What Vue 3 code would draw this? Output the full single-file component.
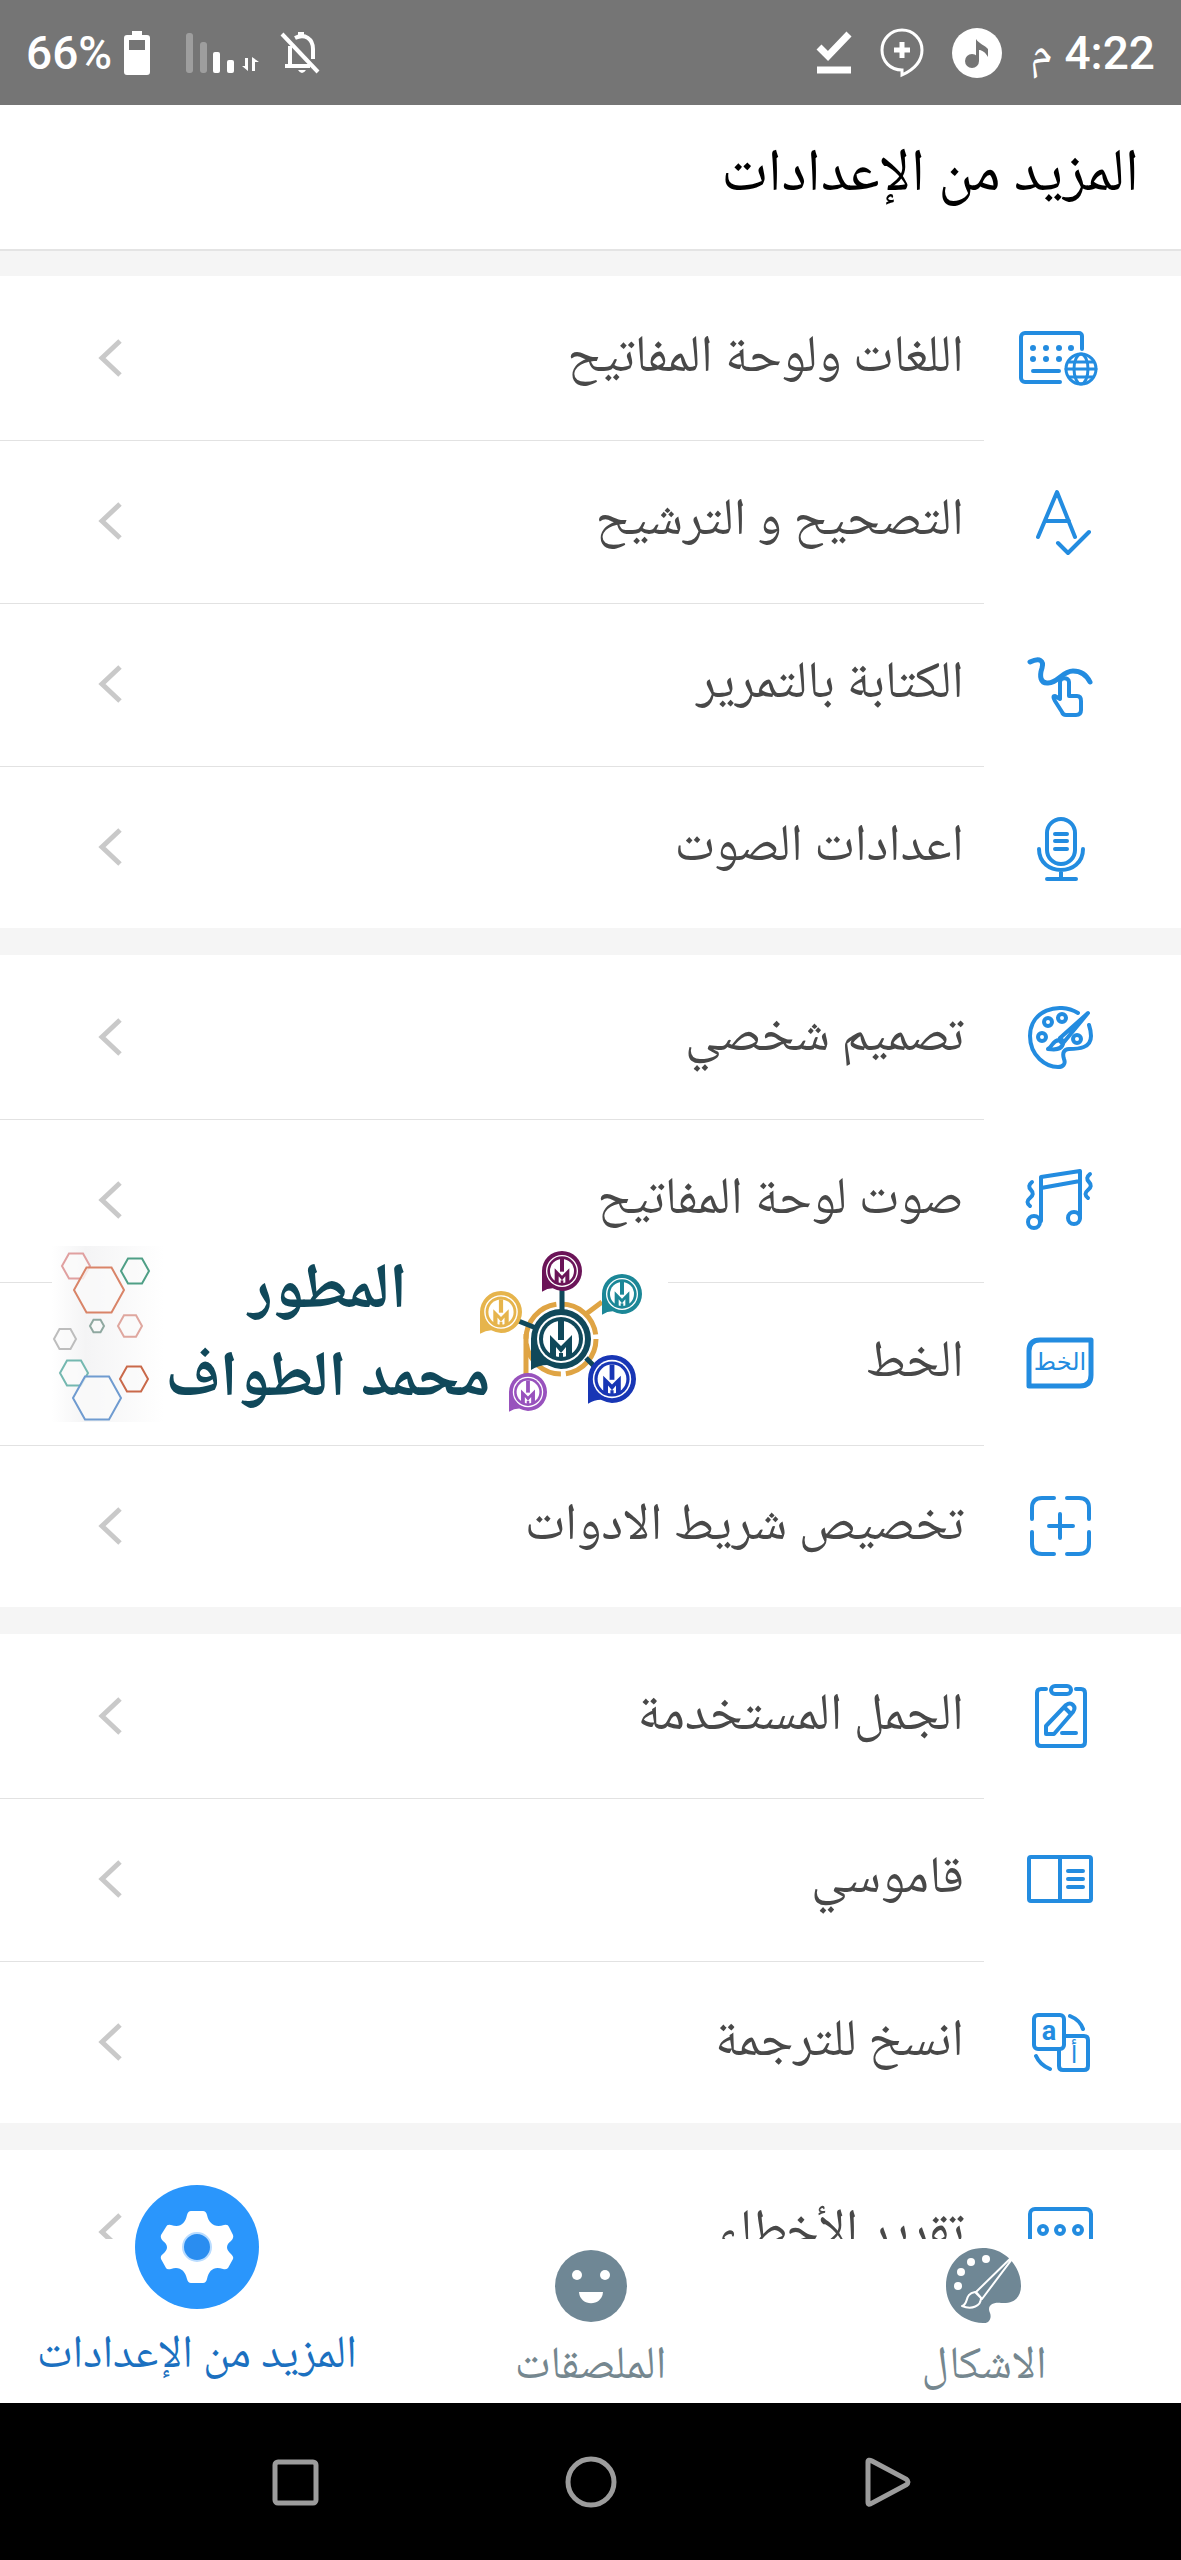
<script setup>
const icons = {
  keyboard:
    '<path d="M70 39V26a3 3 0 0 0-3-3H13a4 4 0 0 0-4 4v41a4 4 0 0 0 4 4h35M21 61h26"/><path stroke-width="6" d="M21 38h0M34 38h0M47 38h0M59 38h0M21 49h0M34 49h0M47 49h0"/><g stroke-width="3"><circle cx="69" cy="59" r="15"/><ellipse cx="69" cy="59" rx="7" ry="15"/><path d="M54 59h30M57 52h24M57 67h24"/></g>',
  correction: '<path d="M26 64 45 19 63 64M33 48h24M46 70l10 10 21-21"/>',
  swipe:
    '<path stroke-width="5" d="M18 26c10-5 14-1 12 6-3 9-1 15 5 15 10 1 15-12 26-12 9 0 14 5 17 11"/><path d="M48 63V46c0-5 9-5 9 0v14h8q4 0 4 5v9q0 5-5 5H54q-3 0-4-3l-7-11q-3-5 0-5z"/>',
  mic:
    '<rect x="35" y="20" width="28" height="45" rx="14"/><path d="M43 35h12M43 42h12M43 50h12M27 50c0 28 44 28 44 0M49 72v8M35 80h29"/>',
  palette:
    '<path d="M66 24C46 12 18 22 18 47c0 20 16 31 28 31 5 0 8-3 6-8-2-6 0-10 5-10 10 0 22-1 22-13 0-4-1-8-2-11"/><circle cx="36" cy="33" r="4"/><circle cx="50" cy="29" r="4"/><circle cx="30" cy="48" r="4"/><circle cx="65" cy="50" r="4"/><path d="M76 24 52 53l-4-4zM47 51l4 4c-2 6-8 6-15 5 5-3 4-8 11-9z"/>',
  sound:
    '<circle cx="22" cy="70" r="6"/><circle cx="62" cy="66" r="6"/><path d="M29 69V25l39-6v47M29 36l39-7"/><path d="M20 30q-5 4-1 8t-1 8 0 8M78 22q-5 4-1 8t-1 8 0 8"/>',
  font:
    '<path stroke-width="5" d="M17 71V36q0-11 11-11h51v35q0 11-11 11z"/><text x="48" y="55" font-size="24" font-family="DejaVu Sans, sans-serif" text-anchor="middle" fill="currentColor" stroke="none">الخط</text>',
  toolbar:
    '<path d="M42 20H30q-10 0-10 10v11M55 20h12q10 0 10 10v11M42 76H30q-10 0-10-10V54M55 76h12q10 0 10-10V54M37 48h24M48 36v24"/>',
  phrases:
    '<path d="M34 21h-5q-4 0-4 4v49q0 4 4 4h40q4 0 4-4V25q0-4-4-4h-5"/><rect x="39" y="18" width="20" height="8" rx="4"/><path d="M34 66v-8l20-21q4-3 7 0t0 7L42 66zM50 65h14M52 39l6 6"/>',
  dictionary:
    '<rect x="17" y="26" width="62" height="44" rx="2"/><path d="M48 26v44M56 40h15M56 48h15M56 56h15"/>',
  translate:
    '<rect x="22" y="21" width="30" height="34" rx="4"/><path d="M52 42h20q4 0 4 4v26q0 4-4 4H51q-4 0-4-4V55M58 22q10 4 13 13M24 62q4 9 14 13"/><g fill="currentColor" stroke="none" text-anchor="middle"><text x="37" y="46" font-size="27" font-weight="700" font-family="Roboto, sans-serif">a</text><text x="62" y="69" font-size="24" font-family="DejaVu Sans, sans-serif">أ</text></g>',
  report:
    '<rect x="18" y="25" width="61" height="48" rx="5"/><circle cx="31" cy="46" r="4"/><circle cx="48" cy="46" r="4"/><circle cx="66" cy="46" r="4"/>'
}

const groups = [
  [
    { icon: 'keyboard', label: 'اللغات ولوحة المفاتيح' },
    { icon: 'correction', label: 'التصحيح و الترشيح' },
    { icon: 'swipe', label: 'الكتابة بالتمرير' },
    { icon: 'mic', label: 'اعدادات الصوت' }
  ],
  [
    { icon: 'palette', label: 'تصميم شخصي' },
    { icon: 'sound', label: 'صوت لوحة المفاتيح' },
    { icon: 'font', label: 'الخط', banner: true },
    { icon: 'toolbar', label: 'تخصيص شريط الادوات' }
  ],
  [
    { icon: 'phrases', label: 'الجمل المستخدمة' },
    { icon: 'dictionary', label: 'قاموسي' },
    { icon: 'translate', label: 'انسخ للترجمة' }
  ],
  [{ icon: 'report', label: 'تقرير الأخطاء' }]
]

const hexagons = [
  { x: 24, y: 20, r: 14, c: '#e0a0a0' },
  { x: 47, y: 44, r: 25, c: '#d98468' },
  { x: 83, y: 25, r: 14, c: '#4f9f86' },
  { x: 45, y: 80, r: 7, c: '#8fa8a0' },
  { x: 78, y: 80, r: 12, c: '#dfa79f' },
  { x: 13, y: 93, r: 11, c: '#bdbdbd' },
  { x: 22, y: 127, r: 14, c: '#74b8b0' },
  { x: 45, y: 152, r: 24, c: '#6f9bd0' },
  { x: 82, y: 133, r: 14, c: '#c9694a' }
]
const hexPoints = ({ x, y, r }) =>
  [[-1, 0], [-0.5, -0.9], [0.5, -0.9], [1, 0], [0.5, 0.9], [-0.5, 0.9]]
    .map(([a, b]) => `${x + a * r},${y + b * r}`)
    .join(' ')

const bubbles = [
  { x: 510, y: 25, s: 20, c: '#6b1458' },
  { x: 570, y: 48, s: 20, c: '#1c8797' },
  { x: 449, y: 66, s: 21, c: '#e6b44c' },
  { x: 476, y: 146, s: 19, c: '#9852bd' },
  { x: 560, y: 133, s: 24, c: '#1836b5' },
  { x: 509, y: 93, s: 30, c: '#10485a' }
]
</script>

<template>
  <div class="phone" dir="rtl" lang="ar">
    <div class="status">
      <div class="status-side">
        <span class="time"><span>4:22</span><span class="meridiem">م</span></span>
        <svg width="50" height="50" viewBox="0 0 50 50">
          <circle cx="25" cy="25" r="25" fill="#fff" />
          <g fill="#757575"><circle cx="20" cy="33" r="7" /><path d="M24 33V11c3 5 9 6 12 10v8c-3-5-6-7-9-7v11z" /></g>
        </svg>
        <svg width="44" height="50" viewBox="0 0 44 50" fill="none" stroke="#fff">
          <path stroke-width="3" d="M22 47v-5C10 42 2 33 2 22a20 20 0 1 1 40 0c0 12-9 20-20 25z" />
          <path stroke-width="5" d="M14 22h16M22 14v16" />
        </svg>
        <svg width="36" height="50" viewBox="0 0 36 50" fill="none" stroke="#fff" stroke-width="7">
          <path d="m3 19 9 9L33 6M1 42h34" />
        </svg>
      </div>
      <div class="status-side battery-side" dir="ltr">
        <span class="percent">66%</span>
        <svg class="battery" width="26" height="44" viewBox="0 0 26 44" fill="#fff">
          <path fill-rule="evenodd" d="M8 0h10v4h5q3 0 3 3v34q0 3-3 3H3q-3 0-3-3V7q0-3 3-3h5zM5 9v10h16V9z" />
        </svg>
        <svg class="signal" width="74" height="40" viewBox="0 0 74 40" fill="#fff">
          <rect width="7" height="40" rx="3" opacity=".3" /><rect x="14" y="9" width="7" height="31" rx="3" opacity=".3" />
          <rect x="27" y="19" width="7" height="21" rx="2" /><rect x="41" y="27" width="7" height="13" rx="2" />
          <path d="M59 25h3v13l-6-5h3zM66 38h3V29h4l-7-5z" />
        </svg>
        <svg width="40" height="42" viewBox="0 0 40 42" fill="none" stroke="#fff" stroke-width="4">
          <path d="M10 14v20M5 34h25M15 6c10-5 18 1 18 11v10" /><path d="M2 2l36 38" />
          <path fill="#fff" stroke="none" d="M18 0h6v6h-6zM18 38h8q-4 6-8 0z" />
        </svg>
      </div>
    </div>

    <header class="header"><h1>المزيد من الإعدادات</h1></header>

    <main class="list">
      <section v-for="(group, g) in groups" :key="g" class="group">
        <div v-for="item in group" :key="item.icon" class="entry">
          <button type="button" class="row">
            <svg class="icon" viewBox="0 0 96 96" v-html="icons[item.icon]" />
            <span class="label">{{ item.label }}</span>
            <svg class="chevron" viewBox="0 0 24 40"><path d="M22 3 4 20l18 17" /></svg>
          </button>
          <div v-if="item.banner" class="banner">
            <svg width="616" height="176" viewBox="0 0 616 176">
              <defs>
                <linearGradient id="fade"><stop offset="0" stop-color="#fff" /><stop offset=".3" stop-color="#f4f4f5" /><stop offset="1" stop-color="#fff" /></linearGradient>
              </defs>
              <rect width="112" height="176" fill="url(#fade)" />
              <polygon v-for="(h, i) in hexagons" :key="i" :points="hexPoints(h)" fill="#fafafa" fill-opacity=".8" :stroke="h.c" stroke-width="2" />
              <g fill="none" stroke="#dfa444" stroke-width="5">
                <circle cx="509" cy="93" r="35" stroke-dasharray="50 5" /><path d="M474 88v45M534 68l16-12" />
              </g>
              <path d="M510 40v24M464 74l20 8M534 112l14 14" stroke="#10485a" stroke-width="5" />
              <g v-for="b in bubbles" :key="b.c" :transform="`translate(${b.x} ${b.y}) scale(${b.s / 30})`">
                <path d="M-30 0a30 30 0 1 1 30 30q-8-1-14-4-8 0-16 5z" :fill="b.c" />
                <circle r="24" fill="#fff" /><circle r="22" :fill="b.c" /><circle r="18" fill="#fff" />
                <path d="M-3-18h6V1h-6z" :fill="b.c" />
                <path d="M-11 19V-4L0 7 11-4v23H5V8L0 14-5 8v11z" :fill="b.c" />
                <path d="M0 14v6" :stroke="b.c" stroke-width="4" />
              </g>
            </svg>
            <div class="developer">
              <span>المطور</span>
              <span>محمد الطواف</span>
            </div>
          </div>
        </div>
      </section>
    </main>

    <nav class="tabs">
      <a href="#themes" class="tab">
        <svg class="tab-icon" viewBox="0 0 76 76">
          <path fill="#6f8795" d="M37 0c22 0 38 18 38 38 0 12-8 18-20 17-10-1-14 4-11 10 2 5-1 11-7 10C15 74 0 58 0 38 0 16 16 0 37 0z" />
          <g fill="#fff"><circle cx="12" cy="38" r="4" /><circle cx="15" cy="24" r="4" /><circle cx="25" cy="14" r="4" /><circle cx="40" cy="11" r="4" /></g>
          <path d="M72 3 30 44l6 7zM29 44l6 6c0 8-9 12-19 8 7-2 2-12 13-14z" fill="#6f8795" stroke="#fff" stroke-width="2" stroke-linejoin="round" />
        </svg>
        <span>الاشكال</span>
      </a>
      <a href="#stickers" class="tab">
        <svg class="tab-icon" viewBox="0 0 76 76">
          <circle cx="38" cy="38" r="36" fill="#6f8795" />
          <g fill="#fff"><circle cx="24" cy="27" r="5" /><circle cx="52" cy="27" r="5" /><path d="M26 44h24c-1 15-23 15-24 0z" /></g>
        </svg>
        <span>الملصقات</span>
      </a>
      <a href="#settings" class="tab active" aria-current="page">
        <svg class="gear" viewBox="0 0 124 124">
          <circle cx="62" cy="62" r="62" fill="#2a96fc" />
          <path fill="#fff" d="M56 26h12q3 0 4 4c2 9 8 13 17 10q4-1 5 2l4 8q1 3-2 6-8 6 0 13 3 3 2 5l-5 9q-2 2-5 1c-9-3-14 1-16 10q-1 4-4 4H56q-3 0-4-4c-2-9-8-13-16-10q-4 1-5-1l-5-9q-1-3 2-5 8-7 0-13-3-3-2-6l5-8q1-3 5-2c9 3 14-1 16-10q1-4 4-4z" />
          <circle cx="62" cy="62" r="14" fill="#2a8df0" stroke="#b9dcff" stroke-width="2" />
        </svg>
        <span>المزيد من الإعدادات</span>
      </a>
    </nav>

    <div class="system" dir="ltr">
      <button type="button" aria-label="التطبيقات الأخيرة"><svg viewBox="0 0 54 54"><rect x="7" y="7" width="41" height="41" rx="3" /></svg></button>
      <button type="button" aria-label="الشاشة الرئيسية"><svg viewBox="0 0 54 54"><circle cx="27" cy="27" r="23" /></svg></button>
      <button type="button" aria-label="رجوع"><svg viewBox="0 0 54 54"><path d="M9 7v40q0 4 4 1l34-18q4-3 0-6L13 6q-4-2-4 1z" /></svg></button>
    </div>
  </div>
</template>

<style>
body {
  margin: 0;
}
</style>

<style scoped>
.phone {
  display: flex;
  flex-direction: column;
  height: 100vh;
  overflow: hidden;
  background: #fff;
  font-family: "Noto Naskh Arabic UI", "Noto Naskh Arabic", "Noto Sans Arabic", "DejaVu Sans", sans-serif;
}
.status {
  flex: none;
  display: flex;
  justify-content: space-between;
  align-items: center;
  height: 105px;
  padding: 0 26px;
  box-sizing: border-box;
  background: #757575;
  color: #fff;
}
.status-side {
  display: flex;
  align-items: center;
  gap: 28px;
}
.time,
.percent {
  font: 500 46px/1 Roboto, "DejaVu Sans", sans-serif;
}
.time {
  display: flex;
  align-items: center;
  gap: 12px;
}
.meridiem {
  font-family: "Noto Naskh Arabic UI", "Noto Naskh Arabic", "DejaVu Sans", sans-serif;
  font-size: 46px;
  font-weight: 400;
}
.battery-side {
  gap: 20px;
}
.battery {
  margin-left: -8px;
}
.signal {
  margin-left: 16px;
}
.header {
  flex: none;
  height: 146px;
  box-sizing: border-box;
  padding: 0 42px 4px;
  border-bottom: 2px solid #e4e4e4;
  display: flex;
  align-items: center;
}
.header h1 {
  margin: 0;
  font-size: 60px;
  font-weight: 400;
  line-height: 72px;
  color: #000;
}
.list {
  flex: 1 1 0;
  min-height: 0;
  overflow: hidden;
  background: #f5f5f5;
  display: flex;
  flex-direction: column;
  gap: 27px;
  padding-top: 25px;
}
.group {
  flex: none;
  background: #fff;
}
.entry {
  position: relative;
}
.row {
  display: flex;
  align-items: center;
  width: 100%;
  height: 163px;
  padding: 0 73px 0 98px;
  border: 0;
  background: none;
  font: inherit;
  color: #484848;
}
.entry + .entry::before {
  content: "";
  position: absolute;
  top: 1px;
  left: 0;
  right: 197px;
  height: 1px;
  background: #e2e2e2;
}
.icon {
  width: 96px;
  height: 96px;
  fill: none;
  stroke: currentColor;
  stroke-width: 4;
  stroke-linecap: round;
  stroke-linejoin: round;
  color: #238ce0;
}
.label {
  flex: 1;
  margin-right: 48px;
  text-align: right;
  font-size: 52px;
  line-height: 64px;
}
.chevron {
  width: 24px;
  height: 40px;
  fill: none;
  stroke: #c9c9c9;
  stroke-width: 5;
}
.banner {
  position: absolute;
  z-index: 1;
  top: -35px;
  left: 52px;
  height: 176px;
  background: #fff;
}
.banner svg {
  display: block;
}
.developer {
  position: absolute;
  top: 2px;
  left: 108px;
  width: 336px;
  display: flex;
  flex-direction: column;
  align-items: center;
  color: #10485a;
  font-size: 64px;
  line-height: 88px;
  font-weight: 700;
  white-space: nowrap;
}
.tabs {
  flex: none;
  display: grid;
  grid-template-columns: repeat(3, 1fr);
  grid-template-rows: minmax(0, 1fr);
  height: 164px;
  background: #fff;
  position: relative;
  z-index: 2;
}
.tab {
  display: flex;
  flex-direction: column;
  align-items: center;
  justify-content: flex-end;
  gap: 14px;
  padding-bottom: 9px;
  color: #75878f;
  font-size: 46px;
  line-height: 56px;
  white-space: nowrap;
  text-decoration: none;
}
.tab.active {
  padding-bottom: 20px;
  gap: 18px;
  color: #1b70c0;
}
.tab-icon {
  flex: none;
  width: 76px;
  height: 76px;
}
.gear {
  flex: none;
  width: 124px;
  height: 124px;
}
.system {
  flex: none;
  display: grid;
  grid-template-columns: repeat(3, 1fr);
  height: 157px;
  padding: 0 12.5%;
  background: #000;
}
.system button {
  display: flex;
  align-items: center;
  justify-content: center;
  padding: 0;
  border: 0;
  background: none;
}
.system svg {
  width: 54px;
  height: 54px;
  fill: none;
  stroke: #9c9c9c;
  stroke-width: 5;
}
</style>
